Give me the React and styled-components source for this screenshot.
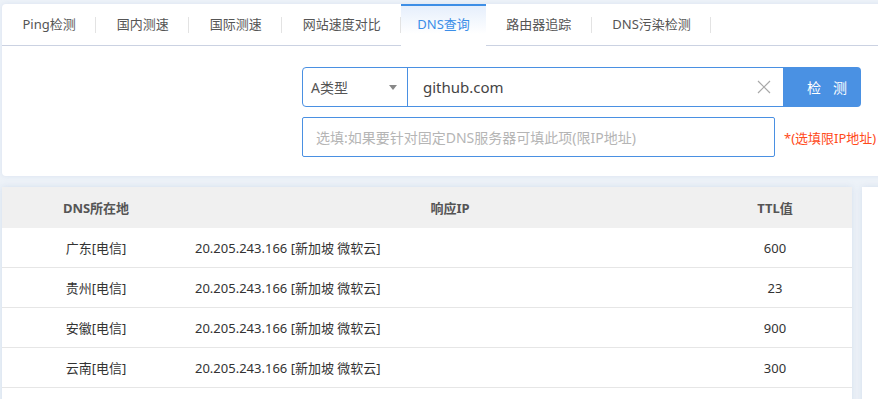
import React, { useState } from "react";
import styled, { createGlobalStyle } from "styled-components";

const GlobalStyle = createGlobalStyle`
  html, body {
    margin: 0;
    padding: 0;
    background: #edf2f8;
    font-family: "Noto Sans", "Noto Sans CJK SC", sans-serif;
    overflow: hidden;
  }
`;

const Page = styled.div`
  display: flex;
  flex-direction: column;
  gap: 11px;
  padding: 4px 0 0 2px;
  width: 900px;
`;

const TopPanel = styled.div`
  background: #fff;
  border-radius: 4px 0 0 4px;
  height: 172px;
  box-shadow: 0 0 4px rgba(180, 200, 225, 0.35);
`;

const TabBar = styled.div`
  display: flex;
  height: 41px;
  border-bottom: 1px solid #cbd2e2;
`;

const Tab = styled.div`
  position: relative;
  display: flex;
  align-items: center;
  padding: 0 ${(p) => (p.$active ? "16px" : "20.5px")} 3px;
  font-size: 13px;
  color: ${(p) => (p.$active ? "#3b8ee8" : "#555")};
  cursor: pointer;
  margin-bottom: -1px;
  ${(p) =>
    p.$active
      ? `
    border-top: 2px solid #3e8fe6;
    background: linear-gradient(#e6effc, #ffffff 70%);
    padding-bottom: 5px;
  `
      : `
    &::after {
      content: "";
      position: absolute;
      right: 0;
      top: 13px;
      height: 16px;
      border-right: 1px solid #e3e3e3;
    }
  `}
`;

const Form = styled.div`
  display: flex;
  flex-direction: column;
  gap: 10px;
  padding: 21px 0 0 300px;
`;

const Row = styled.div`
  display: flex;
  align-items: center;
`;

const SelectBox = styled.div`
  display: flex;
  align-items: center;
  justify-content: space-between;
  box-sizing: border-box;
  width: 106px;
  height: 40px;
  padding: 0 10px 0 8px;
  border: 1px solid #4a90e2;
  border-radius: 4px 0 0 4px;
  font-size: 14px;
  color: #555;
`;

const Caret = styled.span`
  width: 0;
  height: 0;
  border-left: 4px solid transparent;
  border-right: 4px solid transparent;
  border-top: 5px solid #888;
`;

const DomainInput = styled.div`
  display: flex;
  align-items: center;
  justify-content: space-between;
  box-sizing: border-box;
  width: 377px;
  height: 40px;
  margin-left: -1px;
  padding: 0 12px 0 15px;
  border: 1px solid #4a90e2;
  font-size: 15px;
  color: #444;
`;

const Button = styled.button`
  width: 77px;
  height: 40px;
  border: none;
  border-radius: 0 4px 4px 0;
  background: #4a91e3;
  color: #fff;
  font-family: inherit;
  font-size: 14px;
  letter-spacing: 12px;
  text-align: left;
  padding: 0 0 0 23px;
`;

const ServerInput = styled.div`
  display: flex;
  align-items: center;
  box-sizing: border-box;
  width: 473px;
  height: 40px;
  padding: 0 13px;
  border: 1px solid #4a90e2;
  border-radius: 2px;
  font-size: 14px;
  color: #b5b5b5;
`;

const Note = styled.span`
  margin-left: 9px;
  font-size: 13px;
  color: #ff4a1a;
  white-space: nowrap;
`;

const BottomRow = styled.div`
  display: flex;
  gap: 10px;
`;

const TableCard = styled.div`
  width: 850px;
  background: #fff;
  box-shadow: 0 0 6px rgba(180, 200, 225, 0.45);
`;

const SidePanel = styled.div`
  flex: 1;
  background: #fff;
  height: 220px;
  box-shadow: 0 0 6px rgba(180, 200, 225, 0.45);
`;

const Grid = styled.div`
  display: grid;
  grid-template-columns: 188px 520px 1fr;
  box-sizing: border-box;
  height: ${(p) => (p.$head ? "41px" : "40px")};
  align-items: center;
  font-size: 13px;
  color: ${(p) => (p.$head ? "#555" : "#333")};
  font-weight: ${(p) => (p.$head ? 700 : 400)};
  background: ${(p) => (p.$head ? "#f0f0f0" : "#fff")};
  border-bottom: ${(p) => (p.$head ? "none" : "1px solid #e6e6e6")};
`;

const Cell = styled.div`
  text-align: ${(p) => p.$align || "center"};
  padding: ${(p) => (p.$align === "left" ? "0 0 0 5px" : "0")};
  padding-right: ${(p) => (p.$last ? "12px" : "0")};
`;

const Filler = styled.div`
  height: 12px;
`;

const tabs = ["Ping检测", "国内测速", "国际测速", "网站速度对比", "DNS查询", "路由器追踪", "DNS污染检测"];

const rows = [
  { loc: "广东[电信]", ip: "20.205.243.166 [新加坡 微软云]", ttl: 600 },
  { loc: "贵州[电信]", ip: "20.205.243.166 [新加坡 微软云]", ttl: 23 },
  { loc: "安徽[电信]", ip: "20.205.243.166 [新加坡 微软云]", ttl: 900 },
  { loc: "云南[电信]", ip: "20.205.243.166 [新加坡 微软云]", ttl: 300 },
];

const App = () => {
  const [active, setActive] = useState(4);

  return (
    <>
      <GlobalStyle />
      <Page>
        <TopPanel>
          <TabBar>
            {tabs.map((t, idx) => (
              <Tab key={idx} $active={idx === active} onClick={() => setActive(idx)}>
                {t}
              </Tab>
            ))}
          </TabBar>
          <Form>
            <Row>
              <SelectBox>
                A类型
                <Caret />
              </SelectBox>
              <DomainInput>
                github.com
                <svg width="14" height="14" viewBox="0 0 14 14">
                  <path d="M1 1L13 13M13 1L1 13" stroke="#a8a8a8" strokeWidth="1.2" />
                </svg>
              </DomainInput>
              <Button>检测</Button>
            </Row>
            <Row>
              <ServerInput>选填:如果要针对固定DNS服务器可填此项(限IP地址)</ServerInput>
              <Note>*(选填限IP地址)</Note>
            </Row>
          </Form>
        </TopPanel>
        <BottomRow>
          <TableCard>
            <Grid $head>
              <Cell>DNS所在地</Cell>
              <Cell>响应IP</Cell>
              <Cell $last>TTL值</Cell>
            </Grid>
            {rows.map((r, idx) => (
              <Grid key={idx}>
                <Cell>{r.loc}</Cell>
                <Cell $align="left">{r.ip}</Cell>
                <Cell $last>{r.ttl}</Cell>
              </Grid>
            ))}
            <Filler />
          </TableCard>
          <SidePanel />
        </BottomRow>
      </Page>
    </>
  );
};

export default App;
